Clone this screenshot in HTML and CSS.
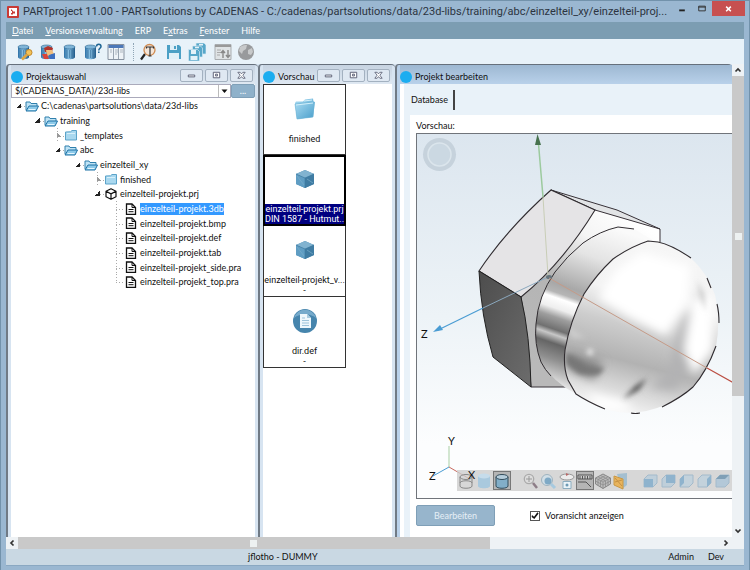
FILE: index.html
```html
<!DOCTYPE html>
<html lang="de">
<head>
<meta charset="utf-8">
<title>PARTproject 11.00</title>
<link rel="stylesheet" href="styles.css">
</head>
<body>
<svg class="defs" aria-hidden="true">
  <defs>
    <linearGradient id="blue" x1="0" x2="1"><stop offset="0" stop-color="#2b6fa5"/><stop offset=".45" stop-color="#8cc4e6"/><stop offset="1" stop-color="#1d5787"/></linearGradient>
    <linearGradient id="folderFill" x1="0" y1="0" x2="1" y2="1"><stop offset="0" stop-color="#a9dbf2"/><stop offset="1" stop-color="#4a9fcb"/></linearGradient>
    <symbol id="db" viewBox="0 0 18 18"><path d="M3 4v10c0 3 11 3 11 0V4z" fill="url(#blue)"/><ellipse cx="8.5" cy="4" rx="5.5" ry="2" fill="#7fb5d8" stroke="#2c658f" stroke-width=".6"/><path d="M6 7v8M8.5 7v8M11 7v8" stroke="#255d88" stroke-width=".5"/></symbol>
    <symbol id="folder-open" viewBox="0 0 14 12"><path d="M1 10V2h4l1 1.500h6V6" fill="#bfe3f5" stroke="#3080ad"/><path d="M1 11l3-5h9.500l-2.500 5z" fill="#8ecbea" stroke="#1f72a5"/><path d="M3.500 9.500h7" stroke="#e6f6ff"/></symbol>
    <symbol id="folder" viewBox="0 0 14 12"><path d="M1.500 11V3l5-.2L8 1.500h4.500V11z" fill="#a9d8ef" stroke="#5ba3c9"/><path d="M3 4.500h8" stroke="#d8f0fa"/></symbol>
    <symbol id="doc" viewBox="0 0 12 12"><path d="M1.500 1h5.500L10.500 4.500V11.300h-9z" fill="#fff" stroke="#111" stroke-width="1.300"/><path d="M7 1v3.500h3.500M3.500 6.500h5M3.500 8.700h5" fill="none" stroke="#111" stroke-width="1"/></symbol>
    <symbol id="part" viewBox="0 0 12 12"><path d="M6 .8l5 2.500v5.400l-5 2.600-5-2.600V3.300zM1 3.300l5 2.600 5-2.600M6 5.900v5.400" fill="#fff" stroke="#111" stroke-width="1.200" stroke-linejoin="round"/></symbol>
    <symbol id="cube" viewBox="0 0 20 20"><path d="M10 1l9 4v10l-9 4-9-4V5z" fill="#4c8bb2"/><path d="M10 1l9 4-9 4-9-4z" fill="#81b3d0"/><path d="M1 5l9 4v10l-9-4z" fill="#5f9dc3"/><path d="M10 9l9-4v10l-9 4z" fill="#3f7ca3"/><path d="M1 5l9 4 9-4M10 9v10" fill="none" stroke="#3d789e" stroke-width=".6"/><path d="M2 7l7 9M12 10l6 4" stroke="#78aeca" stroke-width=".7"/></symbol>
    <symbol id="b-min" viewBox="0 0 22 12"><path d="M7.500 5.500h7v2h-7z" fill="#fff" stroke="#555a70"/></symbol>
    <symbol id="b-max" viewBox="0 0 22 12"><path d="M7.500 2.500h7v6h-7z" fill="#fff" stroke="#555a70"/><path d="M10 4.500h2v2h-2z" fill="#fff" stroke="#555a70"/></symbol>
    <symbol id="b-close" viewBox="0 0 22 12"><path d="M7 2.500h2.500l1.500 1.700 1.500-1.700H15L12.500 5.700 15 9h-2.500L11 7.200 9.500 9H7l2.500-3.300z" fill="#fff" stroke="#555a70" stroke-width=".9"/></symbol>
  </defs>
</svg>

<header class="titlebar">
  <svg class="app-icon" viewBox="0 0 12 12"><rect width="12" height="12" rx="1" fill="#c93a35"/><path d="M2 2h8v8H2z" fill="#fff"/><path d="M4 3.500h1v1h1v1h2v2H6v1H4V7h1V5H4z" fill="#c93a35"/></svg>
  <h1>PARTproject 11.00 - PARTsolutions by CADENAS - C:/cadenas/partsolutions/data/23d-libs/training/abc/einzelteil_xy/einzelteil-proj...</h1>
  <div class="win-buttons">
    <button aria-label="Minimieren"><svg viewBox="0 0 20 16"><path d="M7 10h6" stroke="#222" stroke-width="2"/></svg></button>
    <button aria-label="Maximieren"><svg viewBox="0 0 20 16"><path d="M6.500 5.500h7v5h-7zM6 6.500h8" fill="none" stroke="#333"/></svg></button>
    <button class="close" aria-label="Schließen"><svg viewBox="0 0 20 16"><path d="M7.500 6l5 5M12.500 6l-5 5" stroke="#fff" stroke-width="1.600"/></svg></button>
  </div>
</header>

<div class="frame">
  <nav class="menu">
    <a href="#"><u>D</u>atei</a><a href="#"><u>V</u>ersionsverwaltung</a><a href="#">ERP</a><a href="#">E<u>x</u>tras</a><a href="#"><u>F</u>enster</a><a href="#">Hilfe</a>
  </nav>

  <div class="toolbar">
    <div class="group">
      <button aria-label="Schlüssel"><svg viewBox="0 0 18 18"><use href="#db"/><circle cx="14" cy="9.500" r="3" fill="#f2c259" stroke="#c28a2b"/><path d="M12 11.500l-5 5" stroke="#dda541" stroke-width="2.600"/></svg></button>
      <button aria-label="Benutzer"><svg viewBox="0 0 18 18"><use href="#db"/><path d="M6 5l4-2 5 2-1 4H7z" fill="#b2342b"/><path d="M8 7h6l2 4-7 2z" fill="#f0bd7b"/><path d="M4 11l5 0 2 5H6z" fill="#d8443a"/><path d="M11 12l6-2v6h-5z" fill="#3c6fc0"/></svg></button>
      <button aria-label="Datenbank"><svg viewBox="0 0 18 18"><use href="#db"/></svg></button>
      <button aria-label="Hilfe"><svg viewBox="0 0 18 18"><use href="#db" x="-2"/><path d="M12.500 3.500c0-3 4.500-3 4.500 0 0 1.700-2.200 2-2.200 4M14.800 8.500v1.500" fill="none" stroke="#1f6594" stroke-width="1.500"/></svg></button>
      <button aria-label="Ansicht"><svg viewBox="0 0 18 18"><path d="M1 1.500h16v15H1z" fill="#eef3f7" stroke="#8792a0"/><path d="M1.500 2h15v3h-15z" fill="#4c78b8"/><path d="M6.500 5v11M11.500 5v11" stroke="#9aa5b1"/><path d="M8 7h3M8 9h3M8 11h2M13 7h3M13 9h3M3 7h2M3 9h2" stroke="#adb6bf"/></svg></button>
    </div>
    <div class="group search">
      <button aria-label="Suchen"><svg viewBox="0 0 18 18"><path d="M6 11l-4 5.500" stroke="#222" stroke-width="2.200"/><circle cx="10.500" cy="7" r="5.500" fill="#f3e5d8" stroke="#d08c52" stroke-width="1.300"/><path d="M7.500 5.500V4h7v1.500M11 4v9M9.500 13h3" fill="none" stroke="#333" stroke-width="1.200"/></svg></button>
    </div>
    <div class="group">
      <button aria-label="Speichern"><svg viewBox="0 0 18 18"><path d="M2 2h12l2 2v12H2z" fill="#4ba0c5"/><path d="M5 2h7v5H5zM4 10h10v6H4z" fill="#dff0f8"/><path d="M9 3h2v3H9z" fill="#4ba0c5"/></svg></button>
      <button aria-label="Alles speichern"><svg viewBox="0 0 18 18"><g fill="#57a7c9" stroke="#d6eaf4" stroke-width=".7"><path d="M8 0h8l2 2v9H8z"/><path d="M4.500 3h8l2 2v9h-10z"/><path d="M.5 6.500h9l2 2V18H.5z"/></g><path d="M3 7h5v4H3zM2.500 13h7v4h-7zM7 3.700h4v1.500H7zM11 1h4v1.500h-4z" fill="#e3f1f8"/></svg></button>
    </div>
    <div class="group">
      <button aria-label="Abgleichen"><svg viewBox="0 0 18 18"><path d="M1 1.500h16v15H1z" fill="#dfe3e5" stroke="#a9adb0"/><path d="M1 3h16" stroke="#999" stroke-width="2"/><path d="M3 7h4M3 9.500h4M3 12h3" stroke="#aaa"/><path d="M9 15V8M7 10l2-2.500L11 10M14 7v7M12 12l2 2.500 2-2.500" fill="none" stroke="#888" stroke-width="1.400"/></svg></button>
      <button aria-label="Netzwerk"><svg viewBox="0 0 18 18"><circle cx="9" cy="9" r="8" fill="#989a9c"/><path d="M3 4c3-2 5-2 7-2l-1 4-3 2-1 3-3-3zM11 7l4-2 1 4-2 3-3-1z" fill="#c7c9ca"/></svg></button>
    </div>
  </div>

  <div class="work">
    <div class="panes">
      <section class="pane">
        <header class="pane-title"><i></i><h2>Projektauswahl</h2>
          <div class="pane-buttons"><button aria-label="Minimieren"><svg viewBox="0 0 22 12"><use href="#b-min"/></svg></button><button aria-label="Maximieren"><svg viewBox="0 0 22 12"><use href="#b-max"/></svg></button><button aria-label="Schließen"><svg viewBox="0 0 22 12"><use href="#b-close"/></svg></button></div>
        </header>
        <div class="pane-body">
          <div class="path-row">
            <select aria-label="Verzeichnis"><option>$(CADENAS_DATA)/23d-libs</option></select>
            <button>...</button>
          </div>
          <ul class="tree">
            <li class="l0 open"><svg><use href="#folder-open"/></svg><span>C:\cadenas\partsolutions\data/23d-libs</span></li>
            <li class="l1 open"><svg><use href="#folder-open"/></svg><span>training</span></li>
            <li class="l2 shut"><svg><use href="#folder"/></svg><span>_templates</span></li>
            <li class="l2 open"><svg><use href="#folder-open"/></svg><span>abc</span></li>
            <li class="l3 open"><svg><use href="#folder-open"/></svg><span>einzelteil_xy</span></li>
            <li class="l4 shut"><svg><use href="#folder"/></svg><span>finished</span></li>
            <li class="l4 open"><svg><use href="#part"/></svg><span>einzelteil-projekt.prj</span></li>
            <li class="l5 selected"><svg><use href="#doc"/></svg><span>einzelteil-projekt.3db</span></li>
            <li class="l5"><svg><use href="#doc"/></svg><span>einzelteil-projekt.bmp</span></li>
            <li class="l5"><svg><use href="#doc"/></svg><span>einzelteil-projekt.def</span></li>
            <li class="l5"><svg><use href="#doc"/></svg><span>einzelteil-projekt.tab</span></li>
            <li class="l5"><svg><use href="#doc"/></svg><span>einzelteil-projekt_side.pra</span></li>
            <li class="l5"><svg><use href="#doc"/></svg><span>einzelteil-projekt_top.pra</span></li>
          </ul>
        </div>
      </section>

      <section class="pane">
        <header class="pane-title"><i></i><h2>Vorschau</h2>
          <div class="pane-buttons"><button aria-label="Minimieren"><svg viewBox="0 0 22 12"><use href="#b-min"/></svg></button><button aria-label="Maximieren"><svg viewBox="0 0 22 12"><use href="#b-max"/></svg></button><button aria-label="Schließen"><svg viewBox="0 0 22 12"><use href="#b-close"/></svg></button></div>
        </header>
        <div class="pane-body">
          <ul class="thumbs">
            <li><svg viewBox="0 0 24 24"><path d="M2 6l1-1.500h7l2-2 8-1 .5 3L22 5l-2 15-16 2z" fill="url(#folderFill)"/><path d="M2 7l19-2-1 15-16 2z" fill="url(#folderFill)" stroke="#6db3d5" stroke-width=".6"/><path d="M3 8l17-2M11 4l8-1" stroke="#d2effa"/></svg><span>finished</span></li>
            <li class="selected"><svg viewBox="-2 -2 24 24"><use href="#cube" width="20" height="20"/></svg><span>einzelteil-projekt.prj</span><span>DIN 1587 - Hutmut...</span></li>
            <li><svg viewBox="-2 -2 24 24"><use href="#cube" width="20" height="20"/></svg><span>einzelteil-projekt_v...</span><span>-</span></li>
            <li><svg viewBox="0 0 24 24"><circle cx="12" cy="12" r="12" fill="#4685ad"/><path d="M1 9a11.500 11.500 0 0 1 22 0C17 4 7 4 1 9z" fill="#76aacb"/><path d="M7 5h7l4 4v10H7z" fill="#eef7fc"/><path d="M14 5v4h4" fill="#a8cbe0"/><path d="M9 9h3M9 11.500h7M9 14h7M9 16.500h7" stroke="#9dc3da"/></svg><span>dir.def</span><span>-</span></li>
          </ul>
        </div>
      </section>

      <section class="pane active">
        <header class="pane-title"><i></i><h2>Projekt bearbeiten</h2></header>
        <div class="pane-body editor">
          <div class="tabs"><button>Database</button></div>
          <div class="sheet">
            <p>Vorschau:</p>
            <div class="viewport">
              <svg class="scene" viewBox="417 134 315 364" preserveAspectRatio="xMinYMin slice">
                <defs>
                  <linearGradient id="sky" x1="0" y1="0" x2="0" y2="1"><stop offset="0" stop-color="#dce6ef"/><stop offset=".5" stop-color="#edf3f7"/><stop offset=".85" stop-color="#fcfdfe"/></linearGradient>
                  <linearGradient id="dark" x1="0" y1="0" x2="1" y2="1"><stop offset="0" stop-color="#4d4d4d"/><stop offset="1" stop-color="#6c6c6c"/></linearGradient>
                  <linearGradient id="side" gradientUnits="userSpaceOnUse" x1="540" y1="370" x2="650" y2="230"><stop offset="0" stop-color="#b9b9b9"/><stop offset=".45" stop-color="#b4b4b4"/><stop offset=".75" stop-color="#f4f4f4"/><stop offset="1" stop-color="#fff"/></linearGradient>
                  <linearGradient id="collar" gradientUnits="userSpaceOnUse" x1="605" y1="225" x2="550" y2="385"><stop offset="0" stop-color="#fafafa"/><stop offset=".2" stop-color="#e4e4e4"/><stop offset=".42" stop-color="#a8a8a8"/><stop offset=".47" stop-color="#b5b5b5"/><stop offset=".5" stop-color="#fff"/><stop offset=".56" stop-color="#eee"/><stop offset=".61" stop-color="#9e9e9e"/><stop offset=".68" stop-color="#707070"/><stop offset=".71" stop-color="#c7c7c7"/><stop offset=".76" stop-color="#656565"/><stop offset=".85" stop-color="#8f8f8f"/><stop offset="1" stop-color="#eee"/></linearGradient>
                  <linearGradient id="dome" gradientUnits="userSpaceOnUse" x1="660" y1="243" x2="615" y2="413"><stop offset="0" stop-color="#f6f6f6"/><stop offset=".32" stop-color="#f3f3f3"/><stop offset=".5" stop-color="#cdcdcd"/><stop offset=".7" stop-color="#b2b2b2"/><stop offset=".82" stop-color="#d0d0d0"/><stop offset="1" stop-color="#f8f8f8"/></linearGradient>
                  <filter id="soft" x="-50%" y="-50%" width="200%" height="200%"><feGaussianBlur stdDeviation="5"/></filter>
                  <filter id="soft2" x="-50%" y="-50%" width="200%" height="200%"><feGaussianBlur stdDeviation="2.500"/></filter>
                  <path id="ball" d="M648 241Q630 247 613 259Q596 275 584 294Q570 321 565 350Q563 367 568 380L576 394Q588 402 605 409Q635 418 665 405Q682 397 693 387Q707 371 716 346Q721 319 715 295Q708 274 691 258Q672 245 658 242Z"/>
                  <clipPath id="ballClip"><use href="#ball"/></clipPath>
                </defs>
                <rect x="417" y="134" width="2000" height="364" fill="url(#sky)"/>
                <circle cx="439.500" cy="154.500" r="16.500" fill="#c6d2dc"/><circle cx="439.500" cy="154.500" r="11.500" fill="#cbd8e2" stroke="#dbe5ec" stroke-width="1.500"/>
                <path d="M595 210L660 229V250L600 387H531L521 297Q562 264 595 210Z" fill="url(#side)"/>
                <path d="M551 190L617 210L660 229L595 210Z" fill="#e2e4e6" stroke="#383238"/>
                <path d="M660 229V242M521 297L527 340L531 387H566" fill="none" stroke="#383238"/>
                <path d="M551 190Q507 229 479 271L521 297Q562 264 595 210Z" fill="#e5e4e6" stroke="#302c30" stroke-width="1.100"/>
                <path d="M479 271L521 297Q530 335 531 387L493 357Q481 316 479 271Z" fill="url(#dark)" stroke="#222"/>
                <path d="M634 229L618 227Q600 231 583 243Q567 256 555 272Q538 296 536 324Q534 344 541 362Q553 382 576 394L620 330L656 242Z" fill="url(#collar)"/>
                <path d="M634 229L618 227Q600 231 583 243Q567 256 555 272Q538 296 536 324Q534 344 541 362Q545 370 551 376" fill="none" stroke="#302c30"/>
                <use href="#ball" fill="url(#dome)"/>
                <g clip-path="url(#ballClip)">
                  <g filter="url(#soft)"><path d="M642 252L690 266L688 300L666 336L630 318L598 298L616 270Z" fill="#fff"/><path d="M682 320L700 290L694 355L676 390L650 388L669 370Z" fill="#b2b2b4"/><path d="M692 300L713 296L713 350L694 375L684 350Z" fill="#fff"/><path d="M566 350L603 362L594 380L569 370Z" fill="#888"/><path d="M585 392L622 400L635 412L600 410Z" fill="#fff"/></g>
                  <g filter="url(#soft2)"><path d="M566 352L588 366L605 368L598 375L580 374L566 364Z" fill="#777"/><path d="M647 378L639 390L623 399L635 386Z" fill="#555"/><path d="M697 280L704 294L706 312L700 296Z" fill="#ccc"/><circle cx="590" cy="352" r="3" fill="#eee"/><path d="M567 325L586 338L572 338Z" fill="#ccc"/></g>
                </g>
                <path d="M691 258Q672 245 658 242L648 241Q630 247 613 259Q596 275 584 294Q570 321 565 350Q563 367 568 380L576 394Q588 402 605 409M631 413Q635 414 640 413M662 407Q682 397 693 387Q707 371 716 346M719 323Q719 312 717 304M711 288L707 278" fill="none" stroke="#302c30" stroke-width="1.100"/>
                <path d="M538 138L543 197" stroke="#9cca9e" stroke-width="1.500"/><path d="M543 197L548 276" stroke="#c8cdb6"/><path d="M537.500 134L535 145H541Z" fill="#47724e"/>
                <path d="M548 277L483 308" stroke="#8aa7bd"/><path d="M483 308L438 330" stroke="#4a9cd3" stroke-width="1.200"/><path d="M433 332L440 325L443 330Z" fill="#4a9cd3"/><ellipse cx="549" cy="277" rx="3" ry="2" fill="#65747d"/>
                <path d="M549 278L707 368" stroke="#c59b88"/><path d="M707 368L732 382L1100 590" stroke="#bb4f43" stroke-width="1.200" fill="none"/>
                <g class="axis"><text x="421" y="338">Z</text><path d="M449 467V446" stroke="#a9cfa4"/><path d="M449 467L433 476" stroke="#4a9cd3"/><path d="M449 467L468 478" stroke="#c8695e"/><text x="448" y="445">Y</text><text x="429" y="480">Z</text></g>
              </svg>
              <div class="view-tools">
                <button aria-label="Drahtmodell"><svg viewBox="0 0 18 18"><path d="M3 5v9c0 3 12 3 12 0V5M3 11c0-3 12-3 12 0" fill="none" stroke="#888"/><ellipse cx="9" cy="5" rx="6" ry="2.500" fill="none" stroke="#888"/></svg></button>
                <button aria-label="Schattiert"><svg viewBox="0 0 18 18"><path d="M3 4v10c0 3 12 3 12 0V4" fill="#a9c9de"/><ellipse cx="9" cy="4" rx="6" ry="2.500" fill="#c6dceb"/></svg></button>
                <button class="on" aria-label="Schattiert mit Kanten"><svg viewBox="0 0 18 18"><path d="M3 5v9c0 3 12 3 12 0V5" fill="#82aec8" stroke="#334c5b"/><ellipse cx="9" cy="5" rx="6" ry="2.500" fill="#b6cddb" stroke="#334c5b"/></svg></button>
                <button class="gap" aria-label="Zoom"><svg viewBox="0 0 18 18"><circle cx="7" cy="7" r="4.700" fill="#ddd" stroke="#aaa" stroke-width="1.300"/><path d="M11 11l4 5" stroke="#8d7d87" stroke-width="2.500"/><path d="M7 4v6M4 7h6" stroke="#999"/></svg></button>
                <button aria-label="Ausschnitt"><svg viewBox="0 0 18 18"><circle cx="7" cy="8" r="5.500" fill="#d2dfe7" stroke="#9fb3bf"/><circle cx="8" cy="9" r="3.500" fill="#7fa9c5"/><path d="M11 12l4 4" stroke="#a7c9df" stroke-width="3"/></svg></button>
                <button aria-label="Drehen"><svg viewBox="0 0 18 18"><ellipse cx="9" cy="5" rx="7" ry="3" fill="#ececec" stroke="#999"/><path d="M8 1l3 1.500L8 4z" fill="#b96969"/><path d="M5 9.500h8v7H5z" fill="#eaf3f8" stroke="#8cadc0"/><circle cx="9" cy="13" r="1.500" fill="#6d9ab5"/></svg></button>
                <button class="on" aria-label="Messen"><svg viewBox="0 0 18 18"><path d="M2 3h14v4H2z" fill="#ccc" stroke="#555"/><path d="M4 4v3M6.500 4v3M9 4v3M11.500 4v3M14 4v3M2 10h8l5 5" fill="none" stroke="#555"/></svg></button>
                <button aria-label="Raster"><svg viewBox="0 0 18 18"><path d="M9 2l7.500 4v6L9 16.500 1.500 12V6z" fill="#bbb" stroke="#888"/><path d="M1.500 6L9 10l7.500-4M9 10v6.500M4 4.800l7.500 4.200v6M6.500 3.500L14 7.500v6M11.500 3.500L4 7.500v6M14 4.800L6.500 9v6M1.500 9L9 13l7.500-4" fill="none" stroke="#888" stroke-width=".7"/></svg></button>
                <button aria-label="Schnitt"><svg viewBox="0 0 18 18"><path d="M5 2l10-1v12l-5 4z" fill="#a4bfd0"/><path d="M2 4l9 3v10l-9-4z" fill="#e8b45d" stroke="#c99845"/><path d="M3 6l7 8M3 10l7-2" stroke="#c69143"/></svg></button>
                <button class="gap" aria-label="Vorne"><svg viewBox="0 0 18 18"><path d="M3 7l4-4h9v8l-4 4H3z" fill="#bfcfda" stroke="#a3bacb"/><path d="M3 7h9v8H3z" fill="#8fb3cd"/></svg></button>
                <button aria-label="Hinten"><svg viewBox="0 0 18 18"><path d="M3 7l4-4h9v8l-4 4H3z" fill="#bfcfda" stroke="#a3bacb"/><path d="M7 3h9v8H7z" fill="#8fb3cd"/></svg></button>
                <button aria-label="Links"><svg viewBox="0 0 18 18"><path d="M3 7l4-4h9v8l-4 4H3z" fill="#c3d2dc" stroke="#a3bacb"/><path d="M3 7l4-4v8l-4 4z" fill="#8fb3cd"/></svg></button>
                <button aria-label="Rechts"><svg viewBox="0 0 18 18"><path d="M3 7l4-4h9v8l-4 4H3z" fill="#c3d2dc" stroke="#a3bacb"/><path d="M12 7l4-4v8l-4 4z" fill="#8fb3cd"/></svg></button>
                <button aria-label="Oben"><svg viewBox="0 0 18 18"><path d="M3 7l4-4h9v8l-4 4H3z" fill="#b3c8d8" stroke="#a3bacb"/><path d="M3 7l4-4h9l-4 4z" fill="#7f9fb6"/></svg></button>
              </div>
              <span class="x-label">X</span>
            </div>
            <div class="actions">
              <button disabled>Bearbeiten</button>
              <label><input type="checkbox" checked><span>Voransicht anzeigen</span></label>
            </div>
          </div>
        </div>
      </section>
    </div>

    <div class="vscroll"><svg class="arrow" viewBox="0 0 12 12"><path d="M3.500 7.500L6 5l2.500 2.500" fill="none" stroke="#333" stroke-width="1.700"/></svg><div class="thumb"></div><svg class="arrow" viewBox="0 0 12 12"><path d="M3.500 4.500L6 7l2.500-2.500" fill="none" stroke="#333" stroke-width="1.700"/></svg></div>
    <div class="hscroll"><svg class="arrow" viewBox="0 0 12 12"><path d="M7.500 3.500L5 6l2.500 2.500" fill="none" stroke="#333" stroke-width="1.700"/></svg><div class="thumb"></div><svg class="arrow" viewBox="0 0 12 12"><path d="M4.500 3.500L7 6 4.500 8.500" fill="none" stroke="#333" stroke-width="1.700"/></svg></div>
  </div>

  <footer class="status"><span class="user">jflotho - DUMMY</span><span>Admin</span><span>Dev</span></footer>
</div>
</body>
</html>
```
FILE: styles.css
```css
* { box-sizing: border-box; }

body {
  margin: 0;
  min-height: 100vh;
  display: flex;
  flex-direction: column;
  background: #9ab7d1;
  border: 1px solid #7292ab;
  color: #111;
  font: 9px/15px Lato, "Open Sans", sans-serif;
  overflow: hidden;
}

h1, h2, p, ul { margin: 0; padding: 0; font: inherit; list-style: none; }
button, select, input { font: inherit; color: inherit; margin: 0; padding: 0; }
button { border: 0; background: none; }
svg { display: block; flex: none; }
.defs { position: absolute; width: 0; height: 0; }

/* window title */
.titlebar { display: flex; height: 21px; padding: 0 4px 0 6px; align-items: center; }
.app-icon { width: 12px; height: 12px; }
.titlebar h1 { flex: 1; min-width: 0; margin-left: 4px; font: 11px/20px Roboto, sans-serif; white-space: nowrap; color: #2c3440; }
.win-buttons { display: flex; align-self: flex-start; }
.win-buttons button { width: 20px; height: 15px; }
.win-buttons .close { width: 33px; background: #c75050; }
.win-buttons svg { height: 15px; width: 100%; }

.frame { flex: 1; display: flex; flex-direction: column; margin: 0 5px 5px; border-bottom: 1px solid #8aa8c2; }

.menu { display: flex; gap: 12px; height: 17px; padding-left: 6px; background: #7c9db2; line-height: 17px; }
.menu a { color: #fff; text-decoration: none; }

/* toolbar */
.toolbar { display: flex; align-items: center; gap: 8px; height: 25px; padding-left: 9px; background: #e8f2f9; }
.group { display: flex; gap: 5px; }
.group button, .group svg { width: 18px; height: 18px; }
.group.search { padding-left: 5px; border-left: 1px dotted #8fa5b5; }

/* workspace */
.work { flex: 1; display: grid; grid-template: 1fr 12px / minmax(0, 1fr) 12px; }
.panes { display: grid; grid-template-columns: 252px 137px minmax(0, 1fr); background: #d7e4f1; }
.pane { display: flex; flex-direction: column; min-width: 0; padding: 0 3px; border-left: 2px solid #707a85; border-top: 1px solid #66707c; border-radius: 4px 4px 0 0; background: #d7e4f1; }
.pane.active { padding-right: 0; background: #b9d1ea; }
.pane-title { display: flex; align-items: center; height: 19px; padding-top: 4px; background: linear-gradient(#c6d3e1, #dfe8f2); }
.active .pane-title { background: linear-gradient(#9db8d2, #b9d1ea); }
.pane-title i { width: 12px; height: 12px; border-radius: 50%; background: #1badf0; }
.pane-title h2 { margin-left: 3px; white-space: nowrap; }
.pane-buttons { display: flex; gap: 2px; margin-left: auto; padding: 0 2px 2px 0; }
.pane-buttons button { width: 23px; height: 13px; border: 1px solid #a3b1c0; border-radius: 2px; background: #dfe8f2; }
.pane-buttons svg { width: 21px; height: 11px; }
.pane-body { flex: 1; background: #fff; }

.path-row { display: flex; height: 14px; }
.path-row select { flex: 1; min-width: 0; appearance: none; padding-left: 3px; border: 1px solid #aab; border-radius: 0; line-height: 12px; background: url("data:image/svg+xml,%3Csvg xmlns='http://www.w3.org/2000/svg' width='12' height='12'%3E%3Cpath d='M.5 0v12' stroke='%23bbb'/%3E%3Cpath d='M3.5 4.5h6L6.5 8z' fill='%23111'/%3E%3C/svg%3E") right center no-repeat #fff; }
.path-row button { width: 24px; border: 1px solid #7f9fb7; border-radius: 2px; background: #8fb1ca; color: #fff; line-height: 8px; }

/* project tree */
.tree { display: grid; grid-auto-rows: 15px 15px 14px; }
.tree li { display: flex; align-items: center; gap: 2px; white-space: nowrap; }
.tree li::before { content: ""; width: 12px; height: 100%; margin-right: -2px; background-repeat: no-repeat; }
.tree .open::before {
  background-image: linear-gradient(135deg, transparent 50%, #222 50%), repeating-linear-gradient(90deg, #aaa 0 1px, transparent 1px 3px);
  background-position: 3px 5px, 8px 8px;
  background-size: 5px 5px, 4px 1px;
}
.tree .shut::before {
  background-image: linear-gradient(45deg, #999 50%, transparent 50%), repeating-linear-gradient(#aaa 0 1px, transparent 1px 3px), repeating-linear-gradient(90deg, #aaa 0 1px, transparent 1px 3px);
  background-position: 5px 5px, 5px 0, 8px 8px;
  background-size: 4px 4px, 1px 100%, 4px 1px;
}
.tree .l5::before {
  background-image: repeating-linear-gradient(#aaa 0 1px, transparent 1px 3px), repeating-linear-gradient(90deg, #aaa 0 1px, transparent 1px 3px);
  background-position: 4px 0, 4px 8px;
  background-size: 1px 100%, 8px 1px;
}
.tree .l5:last-child::before { background-size: 1px 8px, 8px 1px; }
.tree svg { width: 14px; height: 12px; }
.l0 { padding-left: 2px; }
.l1 { padding-left: 21px; }
.l2 { padding-left: 41px; }
.l3 { padding-left: 61px; }
.l4 { padding-left: 81px; }
.l5 { padding-left: 101px; }
.tree .selected span { background: #3399ff; color: #fff; line-height: 12px; }

/* thumbnails */
.thumbs { width: 83px; font-family: Roboto, sans-serif; }
.thumbs li { display: flex; flex-direction: column; align-items: center; height: 71px; padding-top: 12px; border: 1px solid #333; border-top-width: 0; line-height: 10px; white-space: nowrap; }
.thumbs li:first-child { border-top-width: 1px; }
.thumbs svg { width: 24px; height: 24px; margin-bottom: 13px; }
.thumbs .selected { outline: 2px solid #000; outline-offset: -2px; }
.thumbs .selected span { width: 79px; background: #000080; color: #fff; text-align: center; }

/* editor */
.editor { padding: 2px 0 0 4px; background: linear-gradient(90deg, #fff 4px, #e9f2f9 4px); }
.tabs { height: 29px; padding: 4px 0 0 7px; }
.tabs button { padding-right: 5px; height: 20px; border-right: 2px solid #444; line-height: 20px; }
.sheet { margin-left: 6px; padding: 3px 0 11px 6px; background: #fff; }
.sheet p { height: 15px; }
.viewport { position: relative; border: 1px solid #70747a; border-right: 0; overflow: hidden; }
.scene { width: 100%; height: 364px; }
.axis text { font: 11px Lato, sans-serif; fill: #111; }
.view-tools { position: absolute; left: 40px; right: 0; bottom: 7px; display: flex; height: 21px; overflow: hidden; background: rgb(205 205 205 / .8); }
.view-tools button { flex: none; width: 18px; height: 19px; margin-top: 1px; }
.view-tools svg { width: 18px; height: 18px; }
.view-tools .on { background: #b5b5b5; outline: 1px solid #777; outline-offset: -1px; }
.view-tools .gap { margin-left: 11px; }
.x-label { position: absolute; left: 51px; bottom: 16px; font-size: 11px; }
.actions { display: flex; align-items: center; gap: 35px; padding-top: 6px; }
.actions button { width: 79px; height: 21px; border: 1px solid #7f9fb7; border-radius: 2px; background: #97b5cc; color: #e6eff6; }
.actions label { display: flex; align-items: center; gap: 5px; }
.actions input { display: grid; place-items: center; appearance: none; width: 10px; height: 10px; border: 1px solid #555; background: #fff; }
.actions input:checked::before { content: ""; width: 8px; height: 8px; background: #111; clip-path: polygon(12% 45%, 38% 65%, 80% 8%, 95% 25%, 42% 95%, 8% 68%); }

/* scrollbars */
.vscroll { display: flex; flex-direction: column; background: #eef2f5; }
.vscroll .thumb, .hscroll .thumb { display: grid; place-items: center; background: #c9c9c9; }
.thumb::before { content: ""; width: 7px; height: 7px; background: #edf1f1; }
.vscroll .thumb { height: 320px; }
.arrow { width: 12px; height: 12px; }
.vscroll .arrow:last-child { margin-top: auto; }
.hscroll { grid-column: 1 / -1; display: flex; padding-right: 12px; background: #eef2f5; }
.hscroll .thumb { flex: 0 0 65%; }
.hscroll .arrow:last-child { margin-left: auto; }

.status { display: flex; gap: 14px; height: 16px; padding-right: 20px; background: #c9d8e3; line-height: 15px; }
.status .user { flex: 1; padding-left: 242px; }
```
